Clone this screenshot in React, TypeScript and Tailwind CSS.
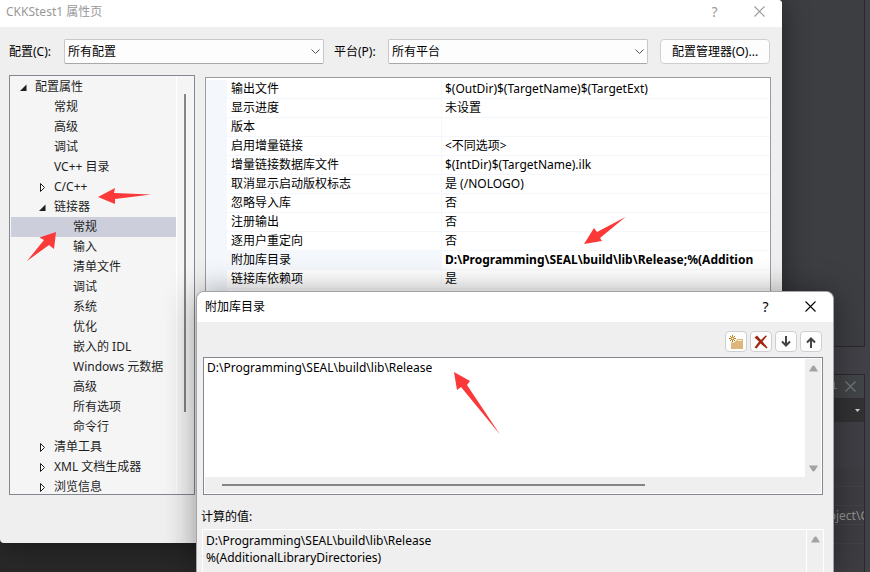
import React, { useState } from 'react';

interface TreeItem {
  label: string;
  level: 0 | 1 | 2;
  state?: 'open' | 'closed';
}

const TREE: TreeItem[] = [
  { label: '配置属性', level: 0, state: 'open' },
  { label: '常规', level: 1 },
  { label: '高级', level: 1 },
  { label: '调试', level: 1 },
  { label: 'VC++ 目录', level: 1 },
  { label: 'C/C++', level: 1, state: 'closed' },
  { label: '链接器', level: 1, state: 'open' },
  { label: '常规', level: 2 },
  { label: '输入', level: 2 },
  { label: '清单文件', level: 2 },
  { label: '调试', level: 2 },
  { label: '系统', level: 2 },
  { label: '优化', level: 2 },
  { label: '嵌入的 IDL', level: 2 },
  { label: 'Windows 元数据', level: 2 },
  { label: '高级', level: 2 },
  { label: '所有选项', level: 2 },
  { label: '命令行', level: 2 },
  { label: '清单工具', level: 1, state: 'closed' },
  { label: 'XML 文档生成器', level: 1, state: 'closed' },
  { label: '浏览信息', level: 1, state: 'closed' },
];

const PROPERTIES: [string, string][] = [
  ['输出文件', '$(OutDir)$(TargetName)$(TargetExt)'],
  ['显示进度', '未设置'],
  ['版本', ''],
  ['启用增量链接', '<不同选项>'],
  ['增量链接数据库文件', '$(IntDir)$(TargetName).ilk'],
  ['取消显示启动版权标志', '是 (/NOLOGO)'],
  ['忽略导入库', '否'],
  ['注册输出', '否'],
  ['逐用户重定向', '否'],
  ['附加库目录', 'D:\\Programming\\SEAL\\build\\lib\\Release;%(Addition'],
  ['链接库依赖项', '是'],
  ['', ''],
];

const INDENT = { 0: 'pl-2', 1: 'pl-[27px]', 2: 'pl-[46px]' };

const CloseIcon = () => (
  <svg width="11" height="11" viewBox="0 0 11 11" fill="none" stroke="currentColor" strokeWidth="1.1">
    <path d="M0.5 0.5 10.5 10.5M10.5 0.5 0.5 10.5" />
  </svg>
);

const TriangleIcon = ({ down = false }: { down?: boolean }) => (
  <svg width="9" height="7" viewBox="0 0 9 7" fill="#a3a3a3">
    {down ? <path d="M0 0.5H9L6 5.5Q4.500 7.500 3 5.500Z" /> : <path d="M0 6.500H9L6 1.500Q4.500-0.500 3 1.500Z" />}
  </svg>
);

const Expander = ({ state }: { state?: 'open' | 'closed' }) => (
  <svg width="9" height="11" viewBox="0 0 9 11" className="mr-[7px] shrink-0">
    {state === 'open' && <path d="M7.500 2.500V9H1Z" fill="#1e1e1e" />}
    {state === 'closed' && <path d="M2.500 1.500V9.500L6.500 5.500Z" fill="#fff" stroke="#1e1e1e" />}
  </svg>
);

interface TitleBarProps {
  title: string;
  className: string;
}

const TitleBar: React.FC<TitleBarProps> = ({ title, className }) => (
  <header className={`flex items-center bg-white ${className}`}>
    <h1 className="flex-1">{title}</h1>
    <button aria-label="帮助" className="w-[45px] text-[14px]">?</button>
    <button aria-label="关闭" className="flex h-5 w-[45px] items-center justify-center">
      <CloseIcon />
    </button>
  </header>
);

interface ComboProps {
  id: string;
  options: string[];
}

const Combo: React.FC<ComboProps> = ({ id, options }) => (
  <div className="relative min-w-0 flex-1">
    <select id={id} className="block h-[25px] w-full appearance-none rounded-xs border border-[#c8c8c8] border-b-[#a8a8a8] bg-[#fdfdfd] pl-[3px]">
      {options.map(o => <option key={o}>{o}</option>)}
    </select>
    <svg width="9" height="6" viewBox="0 0 9 6" fill="none" stroke="#555" className="pointer-events-none absolute top-[10px] right-1">
      <path d="M0.500 0.500 4.500 4.500 8.500 0.500" />
    </svg>
  </div>
);

const ToolButton = ({ label, children }: { label: string; children: React.ReactNode }) => (
  <button aria-label={label} className="flex h-[21px] w-[22px] items-center justify-center rounded-sm border border-[#cfcfcf] bg-[#fdfdfd]">
    {children}
  </button>
);

// Parts of the IDE that show beside the two windows
const IdeBackground = () => (
  <div className="absolute inset-0 flex justify-end bg-[#282828]" aria-hidden="true">
    <div className="flex w-40 flex-col bg-[#424148] pr-[5px]">
      <div className="h-[347px] border-r border-b border-[#2a2a2c] bg-[#3d3e42]" />
      <div className="mt-[27px] flex flex-1 flex-col border-t border-r border-[#2a2a2c] bg-[#3d3d42]">
        <div className="flex h-[23px] items-center justify-end gap-2 bg-[#424547] pr-2 text-[#77797b]">
          <svg width="9" height="12" viewBox="0 0 9 12" fill="none" stroke="currentColor">
            <path d="M2.500 1V7M6.500 1V7M2 1.500H7M0 7.500H9M4.500 8V12" />
          </svg>
          <CloseIcon />
        </div>
        <div className="flex h-6 items-center justify-end bg-[#323234] pr-1">
          <svg width="5" height="3" viewBox="0 0 5 3" fill="#d0d0d0"><path d="M0 0H5L2.500 3Z" /></svg>
        </div>
        <div className="h-[46px] bg-[#403f45]" />
        <div className="h-[19px] border-b border-[#434348]" />
        <div className="h-[19px] border-b border-[#434348]" />
        <div className="flex h-[19px] items-center justify-end overflow-hidden border-b border-[#434348] pt-0.5">
          <span className="-mr-1 text-[12px] text-[#929292]">oject\C</span>
        </div>
        <div className="h-[19px] border-b border-[#434348]" />
      </div>
    </div>
  </div>
);

const PropertyPages = () => {
  const [selected, setSelected] = useState(7);

  return (
    <section className="relative mr-[88px] overflow-hidden rounded-sm rounded-tl-none bg-[#efefef] pb-12 shadow-[0_0_28px_rgba(0,0,0,0.45)]">
      <TitleBar title="CKKStest1 属性页" className="h-[27px] pb-1 pl-1.5 text-[#999]" />

      <div className="mt-3 flex items-center pr-3 pl-[9px]">
        <label htmlFor="config" className="w-[55px]">配置(C):</label>
        <Combo id="config" options={['所有配置', 'Debug', 'Release']} />
        <label htmlFor="platform" className="w-16 pl-2.5">平台(P):</label>
        <Combo id="platform" options={['所有平台', 'Win32', 'x64']} />
        <button className="ml-3 h-[25px] w-[110px] rounded-sm border border-[#cfcfcf] bg-[#fdfdfd]">配置管理器(O)...</button>
      </div>

      <div className="mt-[11px] flex pr-[11px] pl-[9px]">
        <div className="flex h-[420px] w-[186px] shrink-0 border border-[#828790] bg-[#f5f5f5] text-[#1e1e1e]">
          <ul className="min-w-0 flex-1 overflow-hidden py-px pl-px">
            {TREE.map((item, i) => (
              <li key={i}>
                <button
                  onClick={() => setSelected(i)}
                  className={`flex h-5 w-full items-center whitespace-nowrap ${INDENT[item.level]} ${selected === i ? 'bg-[#cccedb]' : ''}`}
                >
                  <Expander state={item.state} />
                  {item.label}
                </button>
              </li>
            ))}
          </ul>
          <div className="w-[18px] border-l border-white pt-[18px] pl-[7px]">
            <div className="h-[318px] w-0.5 bg-[#858585]" />
          </div>
        </div>

        <div className="mt-0.5 ml-2.5 h-[418px] min-w-0 flex-1 overflow-hidden border border-[#999ba0] bg-white pt-0.5">
          <table className="w-full table-fixed border-separate border-spacing-0">
            <colgroup>
              <col className="w-[21px]" />
              <col className="w-[215px]" />
              <col />
            </colgroup>
            <tbody>
              {PROPERTIES.map(([name, value]) => (
                <tr key={name} className="h-[19px]">
                  <td className="bg-[#f4f7fc] p-0" />
                  <td className={`border-r border-b border-[#f4f7fc] p-0 pl-1 leading-[18px] ${name === '附加库目录' ? 'bg-[#f4f7fc]' : ''}`}>{name}</td>
                  <td className={`overflow-hidden border-b border-[#f4f7fc] p-0 pl-[3px] leading-[18px] whitespace-nowrap ${name === '附加库目录' ? 'font-bold' : ''}`}>{value}</td>
                </tr>
              ))}
            </tbody>
          </table>
        </div>
      </div>
    </section>
  );
};

const DirectoriesDialog = () => (
  <section className="absolute top-[291px] right-9 bottom-0 left-[196px] flex flex-col overflow-hidden rounded-t-lg border border-b-0 border-[#a4a4a4] bg-[#efefef] shadow-[0_2px_32px_rgba(0,0,0,0.4)]">
    <TitleBar title="附加库目录" className="h-[30px] shrink-0 pb-px pl-2" />

    <div className="mt-[9px] mr-[11px] flex justify-end gap-[3px]">
      <ToolButton label="新行">
        <svg width="14" height="14" viewBox="0 0 14 14">
          <path d="M2 5.500H7L8.500 4H14V14H2Z" fill="#dcb67a" />
          <path d="M8.500 5.500H13" stroke="#f7ead2" />
          <circle cx="3.500" cy="3.500" r="4" fill="#fdfdfd" />
          <path d="M3.500 0V7M0 3.500H7M1 1 6 6M6 1 1 6" stroke="#c27d1a" />
          <circle cx="3.500" cy="3.500" r="1" fill="#fdfdfd" />
        </svg>
      </ToolButton>
      <ToolButton label="删除">
        <svg width="14" height="14" viewBox="0 0 14 14" fill="#a1260d">
          <path d="M0.500 2.500 3 0.500 7 5 11.500 0.500 13 1 8.500 6.500 13.500 12.500 12.500 13.500 6.500 8.500 2.500 13.500 0.500 12.500 5 6.500Z" />
        </svg>
      </ToolButton>
      <ToolButton label="下移">
        <svg width="10" height="12" viewBox="0 0 10 12" fill="none" stroke="#424242" strokeWidth="2">
          <path d="M5 0V10M1 5.500 5 9.500 9 5.500" />
        </svg>
      </ToolButton>
      <ToolButton label="上移">
        <svg width="10" height="12" viewBox="0 0 10 12" fill="none" stroke="#424242" strokeWidth="2">
          <path d="M5 12V2M1 6.500 5 2.500 9 6.500" />
        </svg>
      </ToolButton>
    </div>

    <div className="mt-[5px] mr-2.5 ml-1.5 flex h-[138px] shrink-0 flex-col border border-[#828790] bg-white p-px">
      <div className="flex min-h-0 flex-1">
        <textarea
          aria-label="附加库目录"
          defaultValue={'D:\\Programming\\SEAL\\build\\lib\\Release'}
          className="min-w-0 flex-1 resize-none overflow-hidden pl-0.5 leading-[18px] outline-none"
        />
        <div className="flex w-4 flex-col items-center justify-between bg-[#efefef] pt-1.5 pb-[5px]">
          <TriangleIcon />
          <TriangleIcon down />
        </div>
      </div>
      <div className="h-4 bg-[#efefef] pt-[7px] pl-[17px]">
        <div className="h-0.5 w-[423px] bg-[#858585]" />
      </div>
    </div>

    <label htmlFor="computed" className="mt-[13px] pl-1 leading-[18px]">计算的值:</label>
    <div className="mt-[3px] mr-[9px] ml-[5px] flex min-h-0 flex-1 border-t border-r border-l border-white">
      <textarea
        id="computed"
        readOnly
        value={'D:\\Programming\\SEAL\\build\\lib\\Release\n%(AdditionalLibraryDirectories)'}
        className="min-w-0 flex-1 resize-none overflow-hidden pt-0.5 pl-[3px] leading-[17px] outline-none"
      />
      <div className="flex w-[17px] justify-center border-l border-white pt-1.5">
        <TriangleIcon />
      </div>
    </div>
  </section>
);

const Arrows = () => (
  <svg width="870" height="572" viewBox="0 0 870 572" fill="#fb3938" className="pointer-events-none absolute top-0 left-0">
    <path d="M98 197 115 188 114 193 151 194.500 115 199 115 204Z" />
    <path d="M56 232 54 249 49 245 27 261 44 240 39.500 237.500Z" />
    <path d="M584 244 594 228 597 232 625.500 217 600 238 602 241Z" />
    <path d="M454 372 470 381 467 385 500 434.500 461 387 457 390Z" />
  </svg>
);

const App: React.FC = () => (
  <main className="relative min-h-screen overflow-hidden font-['Noto_Sans','Noto_Sans_CJK_SC',sans-serif] text-[12px] leading-[18px] text-black">
    <IdeBackground />
    <PropertyPages />
    <DirectoriesDialog />
    <Arrows />
  </main>
);

export default App;
